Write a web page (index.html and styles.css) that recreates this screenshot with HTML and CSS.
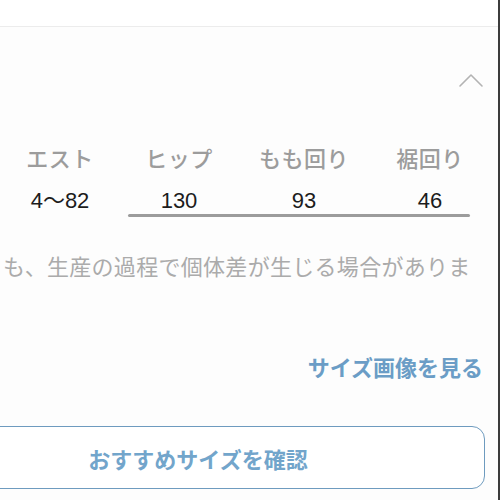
FILE: index.html
```html
<!DOCTYPE html>
<html lang="ja">
<head>
<meta charset="utf-8">
<link rel="stylesheet" href="styles.css">
</head>
<body>
<div class="screen">
  <div class="topbar"></div>
  <div class="sec-head">
    <svg class="chev" width="26" height="16" viewBox="0 0 26 16"><polyline points="2,14 13,3 24,14" fill="none" stroke="#b3b3b3" stroke-width="1.6" stroke-linecap="round" stroke-linejoin="round"/></svg>
  </div>
  <div class="table">
    <div class="lbl">エスト</div>
    <div class="lbl">ヒップ</div>
    <div class="lbl">もも回り</div>
    <div class="lbl">裾回り</div>
    <div class="val">4〜82</div>
    <div class="val">130</div>
    <div class="val">93</div>
    <div class="val">46</div>
  </div>
  <div class="scrollbar"></div>
  <p class="note">も、生産の過程で個体差が生じる場合がありま</p>
  <div class="link-row"><span class="link">サイズ画像を見る</span></div>
  <button class="btn">おすすめサイズを確認</button>
</div>
</body>
</html>
```
FILE: styles.css
```css
html, body {
  margin: 0;
  padding: 0;
  background: #fdfdfd;
}
.screen {
  width: 498px;
  height: 500px;
  border-right: 2px solid #3c3c3c;
  overflow: hidden;
  font-family: "Noto Sans CJK JP", "Noto Sans", sans-serif;
}
.topbar {
  height: 26px;
  background: #ffffff;
  border-bottom: 1px solid #ececec;
}
.sec-head {
  height: 114px;
  display: flex;
  justify-content: flex-end;
  align-items: flex-start;
}
.chev {
  margin-top: 45px;
  margin-right: 14px;
}
.table {
  display: grid;
  grid-template-columns: 120px 118px 132px 120px;
  grid-template-rows: 30px 26px;
  row-gap: 16px;
  padding-top: 1px;
}
.lbl {
  text-align: center;
  font-size: 22px;
  line-height: 30px;
  font-weight: 500;
  color: #9c9c9c;
  white-space: nowrap;
  letter-spacing: 0.5px;
}
.val {
  text-align: center;
  font-family: "Liberation Sans", Arial, "Noto Sans CJK JP", sans-serif;
  font-size: 22px;
  line-height: 26px;
  color: #1c1c1c;
  white-space: nowrap;
}
.scrollbar {
  margin-left: 128px;
  width: 342px;
  height: 3px;
  border-radius: 2px;
  background: #9c9c9c;
}
.note {
  margin: 32px 0 0 0;
  padding-left: 3px;
  font-size: 22px;
  line-height: 32px;
  color: #ababab;
  white-space: nowrap;
  overflow: hidden;
  letter-spacing: 0.3px;
}
.link-row {
  margin-top: 70px;
  display: flex;
  justify-content: flex-end;
  padding-right: 15px;
}
.link {
  font-size: 22px;
  line-height: 30px;
  font-weight: 700;
  color: #6b9dc6;
}
.btn {
  display: block;
  margin: 45px 0 0 -89px;
  width: 574px;
  height: 63px;
  box-sizing: border-box;
  border: 1.5px solid #6e9bbf;
  border-radius: 13px;
  background: #ffffff;
  font-family: "Noto Sans CJK JP", "Noto Sans", sans-serif;
  font-size: 22px;
  font-weight: 700;
  color: #72a5cb;
  padding: 0;
}
```
